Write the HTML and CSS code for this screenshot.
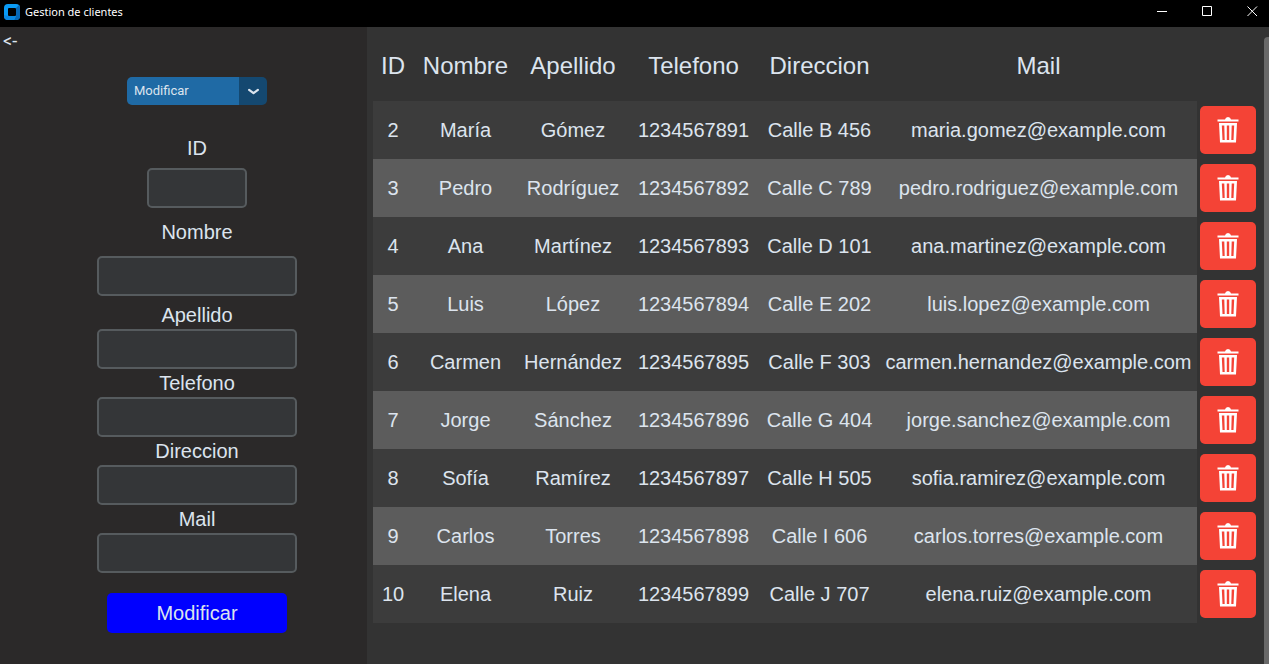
FILE: index.html
```html
<!DOCTYPE html>
<html lang="es">
<head>
<meta charset="utf-8">
<title>Gestion de clientes</title>
<link rel="stylesheet" href="styles.css">
</head>
<body>
<svg class="symbols" aria-hidden="true">
  <symbol id="trash" viewBox="0 0 22 26">
    <path fill="#fff" fill-rule="evenodd" d="M0.500 2.500H8Q8.500 0 11 0T14 2.500H21.500V4.500H0.500ZM2 6H20L19 25.500H3ZM4.800 8.500L5.500 23H7.700L7.300 8.500ZM9.800 8.500V23H12.200V8.500ZM14.700 8.500L14.300 23H16.500L17.200 8.500Z"/>
  </symbol>
</svg>
<header class="titlebar">
  <svg class="logo" viewBox="0 0 16 16" aria-hidden="true">
    <rect width="16" height="16" rx="4" fill="#0a9bf5"/>
    <path d="M12 4L15 1Q16 2 16 4V12Q16 16 12 16H10L12 12Z" fill="#0767b5"/>
    <path d="M0 11V12Q0 16 4 16H10L12 12H4Z" fill="#0a87e0"/>
    <rect x="4" y="4" width="8" height="8" rx="1" fill="#000"/>
  </svg>
  <h1 class="window-title">Gestion de clientes</h1>
  <div class="window-controls">
    <button class="window-button" aria-label="Minimizar"><svg viewBox="0 0 11 11"><path d="M0 5.500H10"/></svg></button>
    <button class="window-button" aria-label="Maximizar"><svg viewBox="0 0 11 11"><path d="M.5.5H9.500V9.500H.5Z"/></svg></button>
    <button class="window-button" aria-label="Cerrar"><svg viewBox="0 0 11 11"><path d="M.5.5L10 10M10 .5L.5 10"/></svg></button>
  </div>
</header>
<main class="workspace">
  <aside class="sidebar">
    <button class="back">&lt;-</button>
    <form class="form">
      <div class="mode">
        <select class="mode-select" aria-label="Accion"><option>Modificar</option></select>
        <svg class="mode-arrow" viewBox="0 0 10 6" aria-hidden="true"><path d="M1 1.500L5 4.500L9 1.500"/></svg>
      </div>
      <label class="label label-id" for="id">ID</label>
      <input class="entry entry-id" id="id" type="text">
      <label class="label label-name" for="nombre">Nombre</label>
      <input class="entry entry-name" id="nombre" type="text">
      <label class="label" for="apellido">Apellido</label>
      <input class="entry" id="apellido" type="text">
      <label class="label" for="telefono">Telefono</label>
      <input class="entry" id="telefono" type="text">
      <label class="label" for="direccion">Direccion</label>
      <input class="entry" id="direccion" type="text">
      <label class="label" for="mail">Mail</label>
      <input class="entry" id="mail" type="text">
      <button class="submit" type="button">Modificar</button>
    </form>
  </aside>
  <section class="content">
    <table class="clients">
      <colgroup><col class="col-id"><col class="col-name"><col class="col-surname"><col class="col-phone"><col class="col-address"><col><col class="col-action"></colgroup>
      <thead>
        <tr><th>ID</th><th>Nombre</th><th>Apellido</th><th>Telefono</th><th>Direccion</th><th>Mail</th><td></td></tr>
      </thead>
      <tbody>
        <tr><td>2</td><td>María</td><td>Gómez</td><td>1234567891</td><td>Calle B 456</td><td>maria.gomez@example.com</td><td class="action"><button class="delete" aria-label="Eliminar 2"><svg><use href="#trash"/></svg></button></td></tr>
        <tr><td>3</td><td>Pedro</td><td>Rodríguez</td><td>1234567892</td><td>Calle C 789</td><td>pedro.rodriguez@example.com</td><td class="action"><button class="delete" aria-label="Eliminar 3"><svg><use href="#trash"/></svg></button></td></tr>
        <tr><td>4</td><td>Ana</td><td>Martínez</td><td>1234567893</td><td>Calle D 101</td><td>ana.martinez@example.com</td><td class="action"><button class="delete" aria-label="Eliminar 4"><svg><use href="#trash"/></svg></button></td></tr>
        <tr><td>5</td><td>Luis</td><td>López</td><td>1234567894</td><td>Calle E 202</td><td>luis.lopez@example.com</td><td class="action"><button class="delete" aria-label="Eliminar 5"><svg><use href="#trash"/></svg></button></td></tr>
        <tr><td>6</td><td>Carmen</td><td>Hernández</td><td>1234567895</td><td>Calle F 303</td><td>carmen.hernandez@example.com</td><td class="action"><button class="delete" aria-label="Eliminar 6"><svg><use href="#trash"/></svg></button></td></tr>
        <tr><td>7</td><td>Jorge</td><td>Sánchez</td><td>1234567896</td><td>Calle G 404</td><td>jorge.sanchez@example.com</td><td class="action"><button class="delete" aria-label="Eliminar 7"><svg><use href="#trash"/></svg></button></td></tr>
        <tr><td>8</td><td>Sofía</td><td>Ramírez</td><td>1234567897</td><td>Calle H 505</td><td>sofia.ramirez@example.com</td><td class="action"><button class="delete" aria-label="Eliminar 8"><svg><use href="#trash"/></svg></button></td></tr>
        <tr><td>9</td><td>Carlos</td><td>Torres</td><td>1234567898</td><td>Calle I 606</td><td>carlos.torres@example.com</td><td class="action"><button class="delete" aria-label="Eliminar 9"><svg><use href="#trash"/></svg></button></td></tr>
        <tr><td>10</td><td>Elena</td><td>Ruiz</td><td>1234567899</td><td>Calle J 707</td><td>elena.ruiz@example.com</td><td class="action"><button class="delete" aria-label="Eliminar 10"><svg><use href="#trash"/></svg></button></td></tr>
      </tbody>
    </table>
    <div class="scrollbar"></div>
  </section>
</main>
</body>
</html>
```
FILE: styles.css
```css
* {
  box-sizing: border-box;
}

body {
  margin: 0;
  min-height: 100vh;
  display: flex;
  flex-direction: column;
  background: #333;
  color: #dce4ee;
  font: 20px/28px "Liberation Sans", Arial, sans-serif;
}

button,
input,
select {
  margin: 0;
  border: 0;
  color: inherit;
  font: inherit;
}

.symbols {
  display: none;
}

.titlebar {
  display: flex;
  align-items: center;
  height: 27px;
  padding: 0 0 4px 4px;
  background: #000;
}

.logo {
  width: 16px;
  height: 16px;
}

.window-title {
  margin: 0 0 0 5px;
  color: #fff;
  font: 11px/16px "Noto Sans", sans-serif;
}

.window-controls {
  display: flex;
  margin-left: auto;
}

.window-button {
  display: flex;
  align-items: center;
  justify-content: center;
  width: 45px;
  height: 22px;
  padding: 0 0 0 12px;
  background: none;
}

.window-button svg {
  width: 11px;
  height: 11px;
  fill: none;
  stroke: #fff;
}

.workspace {
  flex: 1;
  display: flex;
}

.sidebar {
  display: flex;
  align-items: flex-start;
  width: 367px;
  background: #2b2929;
}

.back {
  width: 27px;
  height: 28px;
  padding: 0 0 0 3px;
  background: none;
  font: 18px/28px Roboto, sans-serif;
  text-align: left;
}

.form {
  flex: 1;
  display: flex;
  flex-direction: column;
  align-items: center;
  padding-top: 50px;
}

.mode {
  position: relative;
  display: flex;
  width: 140px;
  height: 28px;
}

.mode-select {
  appearance: none;
  width: 100%;
  padding: 0 34px 0 7px;
  border-radius: 5px;
  background: linear-gradient(to left, #144870 28px, #1f6aa5 28px);
  font: 13px/28px Roboto, sans-serif;
}

.mode-arrow {
  position: absolute;
  right: 8px;
  top: 11px;
  width: 11px;
  height: 7px;
  fill: none;
  stroke: #dce4ee;
  stroke-width: 2;
  stroke-linecap: round;
  stroke-linejoin: round;
  pointer-events: none;
}

.label-id {
  margin: 29px 0 6px;
}

.label-name {
  margin: 10px 0;
}

.entry {
  width: 200px;
  height: 40px;
  padding: 0 8px;
  border: 2px solid #565b5e;
  border-radius: 5px;
  background: #343638;
}

.entry-id {
  width: 100px;
}

.entry-name {
  margin-bottom: 5px;
}

.submit {
  width: 180px;
  height: 40px;
  margin-top: 20px;
  border-radius: 5px;
  background: #00f;
}

.content {
  flex: 1;
  display: flex;
  align-items: flex-start;
  padding-left: 6px;
}

.clients {
  flex: 1;
  table-layout: fixed;
  border-collapse: collapse;
  text-align: center;
}

.col-id {
  width: 40px;
}

.col-name {
  width: 105px;
}

.col-surname {
  width: 110px;
}

.col-phone {
  width: 131px;
}

.col-address {
  width: 121px;
}

.col-action {
  width: 62px;
}

.clients th,
.clients td {
  padding: 0;
  white-space: nowrap;
}

.clients th {
  height: 74px;
  padding-top: 4px;
  font-size: 24px;
  font-weight: normal;
}

.clients tbody td {
  height: 58px;
  background: #3c3c3c;
}

.clients tbody tr:nth-child(even) td {
  background: #5c5c5c;
}

.clients tbody tr td.action {
  background: none;
}

.delete {
  display: flex;
  align-items: center;
  justify-content: center;
  width: 56px;
  height: 48px;
  margin: 0 auto;
  padding: 0;
  border-radius: 5px;
  background: #f44336;
}

.delete svg {
  width: 22px;
  height: 26px;
}

.scrollbar {
  align-self: stretch;
  width: 5px;
  margin: 10px 0 0 5px;
  border-radius: 4px 0 0 0;
  background: #696969;
}
```
